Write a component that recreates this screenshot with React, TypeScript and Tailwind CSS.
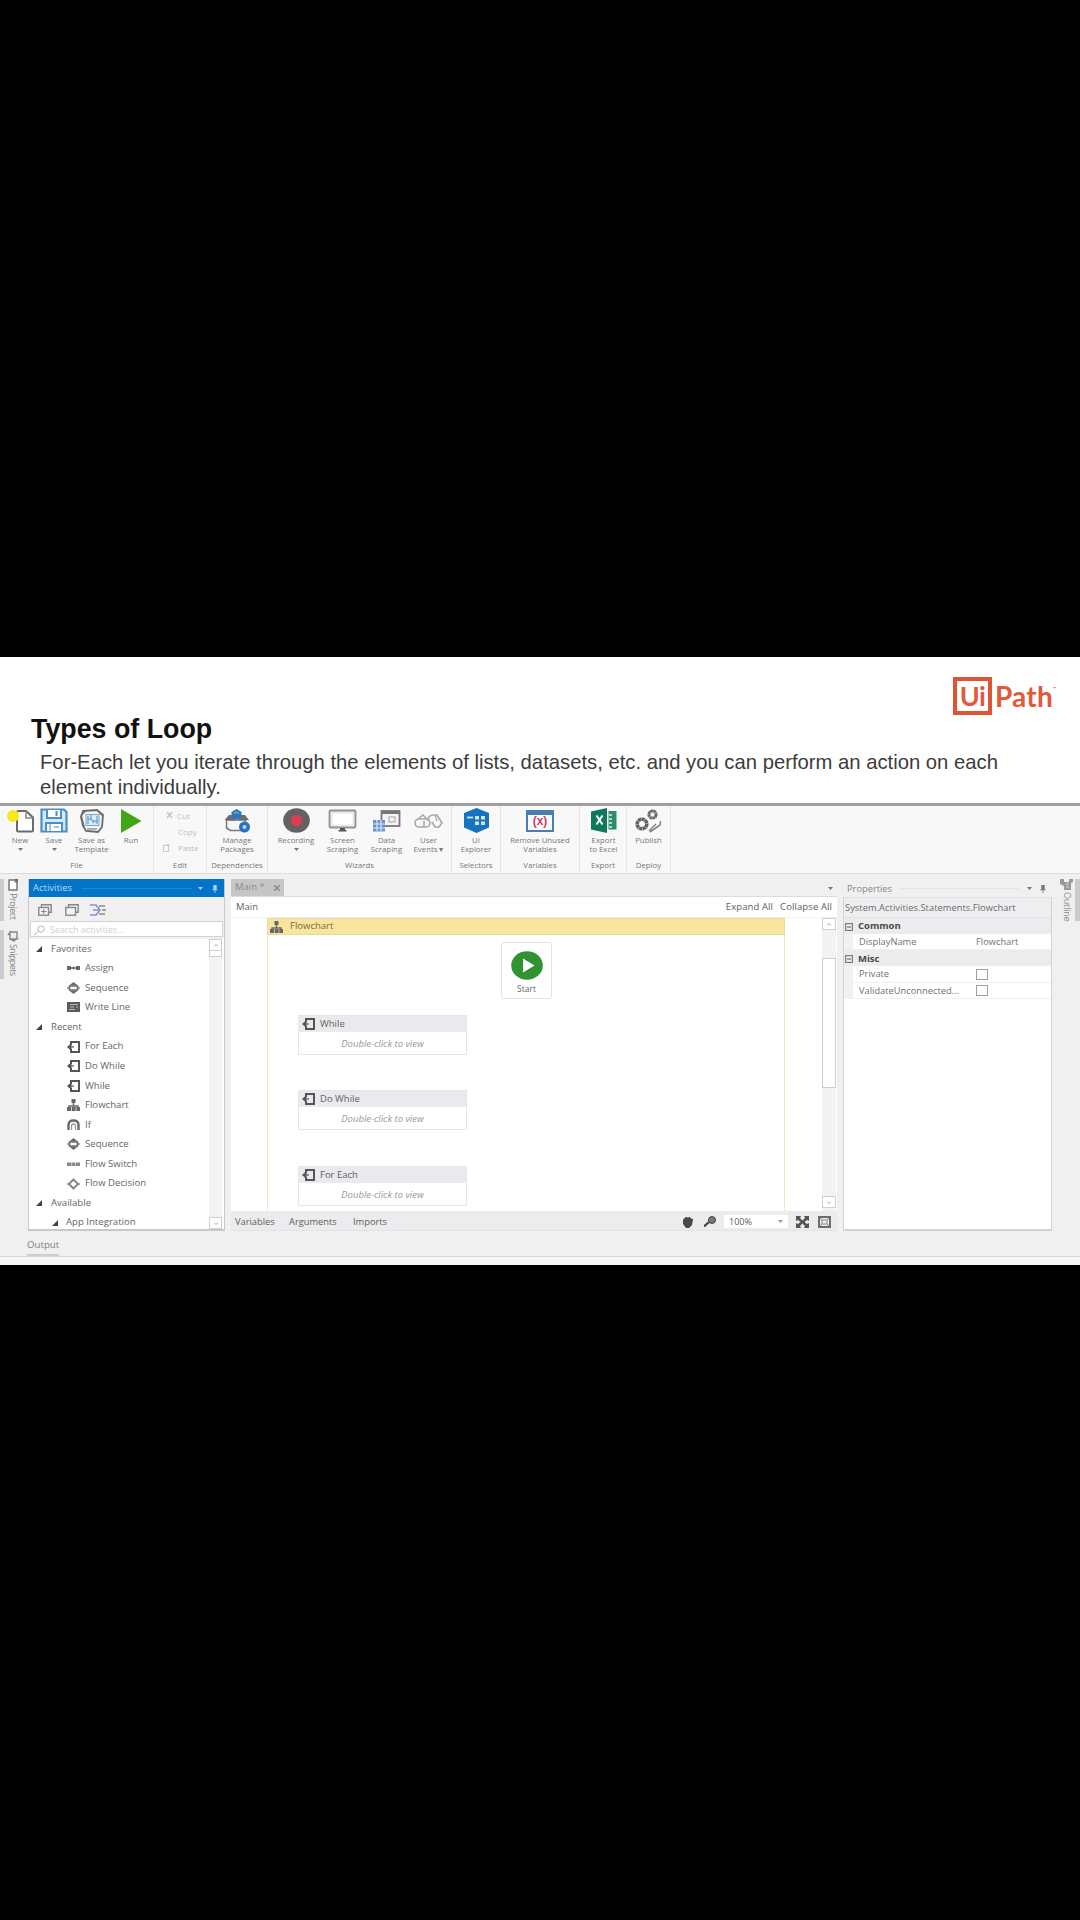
import React from "react";

type P = { children?: React.ReactNode; className?: string };

const G = "#686868";

/* ---------- small glyphs ---------- */
const Svg = ({ w, h, vb, children }: { w: number; h: number; vb: string; children: React.ReactNode }) => (
  <svg width={w} height={h} viewBox={vb} preserveAspectRatio="none" fill="none" className="block shrink-0">
    {children}
  </svg>
);

const Down = ({ c = "#777" }: { c?: string }) => (
  <Svg w={5} h={3} vb="0 0 6 4"><path d="M0 0h6L3 4z" fill={c} /></Svg>
);

const NewIcon = () => (
  <Svg w={29} h={24} vb="0 0 29 24">
    <path d="M11 3.500Q11 2 12.500 2H20l7 6.500V21q0 1.500-1.500 1.500H12.500Q11 22.500 11 21z" fill="#fff" stroke="#6a6a6a" strokeWidth="2" />
    <path d="M20 2v7h7" stroke="#888" strokeWidth="1.500" />
    <circle cx="7" cy="7" r="6" fill="#f7ea1c" />
  </Svg>
);
const SaveIcon = () => (
  <Svg w={28} h={25} vb="0 0 28 25">
    <path d="M1.500 1.500h22.500l2.500 2.500v19.500h-25z" fill="#d5e9f7" stroke="#4a8fc6" strokeWidth="2.200" />
    <path d="M7 2v8h14V2" fill="#fff" stroke="#4a8fc6" strokeWidth="2" />
    <path d="M16.500 3v5" stroke="#4a8fc6" strokeWidth="2" />
    <path d="M6 23v-8h16v8" fill="#fff" stroke="#4a8fc6" strokeWidth="2" />
    <path d="M10 16v7M14 19h5" stroke="#7fb2db" strokeWidth="1.500" />
  </Svg>
);
const TemplateIcon = () => (
  <Svg w={26} h={24} vb="0 0 26 24">
    <path d="M4 2 18 1l6 5-1 12-4 5-12-1-3-5-2-9z" fill="#f4f4f4" stroke="#6a6a6a" strokeWidth="1.800" />
    <path d="M2 6 6 3M2 6l3 12M19 2l5 5" stroke="#6a6a6a" strokeWidth="1.500" />
    <rect x="7" y="5.500" width="13" height="11" fill="#dcecf6" stroke="#74a9cf" />
    <path d="M9 7v8M12 6v4l3 4M18 7v8M8 10h5M14 12h5" stroke="#74a9cf" strokeWidth="1.400" />
    <path d="M8 20h10" stroke="#888" strokeWidth="1.300" />
  </Svg>
);
const RunIcon = () => (<Svg w={21} h={24} vb="0 0 21 24"><path d="M0 0 20.500 12 0 24z" fill="#43a417" /></Svg>);
const PackagesIcon = () => (
  <Svg w={28} h={24} vb="0 0 28 24">
    <path d="M3.500 11h19v10.500h-15L3.500 19z" fill="#f6f6f6" stroke="#777" strokeWidth="1.500" />
    <path d="M1.500 11 6 6h6v5.500zM26 11l-4-5h-6v5.500z" fill="#6d6d6d" />
    <path d="M13.500 0 18.500 3v5.500l-5 2.500-5-2.500V3z" fill="#2d77bd" />
    <path d="M11 4.500 13.500 3 16 4.500" stroke="#9cc5e8" />
    <circle cx="21.500" cy="18" r="5.500" fill="#2474bd" />
    <circle cx="21.500" cy="18" r="2" fill="#b9d6ee" />
  </Svg>
);
const RecordIcon = () => (
  <Svg w={27} h={25} vb="0 0 27 25"><ellipse cx="13.500" cy="12.500" rx="13.300" ry="12.200" fill="#626262" /><circle cx="13.500" cy="12.500" r="5.800" fill="#dc3c50" /></Svg>
);
const ScreenIcon = () => (
  <Svg w={29} h={24} vb="0 0 29 24">
    <rect x="1.500" y="1.500" width="26" height="17" rx="1" fill="#e8e8e8" stroke="#959595" strokeWidth="1.800" />
    <rect x="4.500" y="4.500" width="20" height="11" fill="#fff" />
    <path d="M12 19h5v2h1.500v1.500h-8V21H12z" fill="#555" />
  </Svg>
);
const DataIcon = () => (
  <Svg w={29} h={24} vb="0 0 29 24">
    <rect x="9.500" y="2" width="18" height="15" fill="#f5f5f5" stroke="#777" strokeWidth="1.800" />
    <path d="M9 3.500h19" stroke="#777" strokeWidth="3" />
    <path d="M17 8h6v5h-6z" stroke="#bbb" strokeWidth="1.500" />
    <rect x="1" y="11" width="12" height="11.500" fill="#6b93cc" />
    <path d="M1 15h12M1 19h12M5 11v11M9 11v11" stroke="#dbe7f5" strokeWidth="1.200" />
  </Svg>
);
const EventsIcon = () => (
  <Svg w={29} h={16} vb="0 0 29 16">
    <rect x="1" y="6" width="15" height="8" rx="4" stroke="#a8a8a8" strokeWidth="1.600" />
    <path d="M4 6 9 2l4 4M10 14V8" stroke="#a8a8a8" strokeWidth="1.600" />
    <path d="M14 8q0-6 5.500-6H23l5 8-3 4h-4l-3-5" stroke="#a8a8a8" strokeWidth="1.700" />
    <path d="m21 2 2 6" stroke="#a8a8a8" strokeWidth="1.200" />
  </Svg>
);
const ExplorerIcon = () => (
  <Svg w={27} h={25} vb="0 0 27 25">
    <path d="M13.500 0 26 5v14.500L13.500 25 1 19.500V5z" fill="#1673c0" />
    <path d="M12 8h4v3.500h-4zM18 8h4v3.500h-4zM12 13.500h4V17h-4zM18 13.500h4V17h-4z" fill="#cfe5f8" />
    <path d="M4 9.500h6" stroke="#cfe5f8" strokeWidth="1.800" />
  </Svg>
);
const UnusedIcon = () => (
  <div className="h-[22px] w-[28px] border-2 border-t-[5px] border-[#4a7fb0] bg-[#f5f9fc] text-center text-[12px] leading-[13px] font-bold text-[#d33d5c] [font-family:'Liberation_Sans',sans-serif]">(x)</div>
);
const ExcelIcon = () => (
  <Svg w={26} h={25} vb="0 0 26 25">
    <path d="M0 3.500 16 0v25L0 21.500z" fill="#0f7a5b" />
    <rect x="17.500" y="3" width="8" height="18.500" fill="#2a8e6c" />
    <path d="M18 7h3M18 11h3M18 15h3M18 19h3" stroke="#d9eee6" strokeWidth="1.300" />
    <path d="m5.500 7.500 6 9M11.500 7.500l-6 9" stroke="#fff" strokeWidth="2" />
  </Svg>
);
const PublishIcon = () => (
  <Svg w={27} h={24} vb="0 0 27 24">
    <circle cx="7" cy="15" r="4.800" stroke="#626262" strokeWidth="3.600" strokeDasharray="3.200 .4" />
    <circle cx="17.500" cy="5.500" r="3.600" stroke="#6a6a6a" strokeWidth="3" strokeDasharray="2.600 .3" />
    <path d="m14 22 7-7M15 23l10-7 .5-4" stroke="#888" strokeWidth="1.600" />
  </Svg>
);

const icons: Record<string, React.ReactNode> = {
  assign: <><path d="M0 6h13" stroke={G} strokeWidth="1.500" /><path d="M0 4h4v4H0zM9 4h4v4H9z" fill={G} /><path d="m5 6 2-2v4z" fill={G} /></>,
  seq: <><path d="M6.500 0 11 3.500H2zM6.500 12 2 8.500h9z" fill="#6c6c6c" /><path d="M2.500 4h8v4h-8z" stroke="#6c6c6c" strokeWidth="1.700" /><path d="M0 6h2M11 6h2" stroke="#888" strokeWidth="1.500" /></>,
  write: <><rect x="0" y="1" width="13" height="10" fill="#5a5a5a" /><path d="M3 3.500h8M3 6h4M9 6h2M2 8.500h6" stroke="#bbb" /></>,
  loop: <><path d="M4 1h8v10H4" stroke="#555" strokeWidth="2" /><path d="M4 0v4M4 12V8" stroke="#555" strokeWidth="2" /><path d="M0 6l4.500-4v8z" fill="#555" /><path d="M4 6h3" stroke="#777" strokeWidth="1.500" /></>,
  flow: <><rect x="4.500" y="0" width="4" height="4" fill={G} /><path d="M6.500 4v3M2 9V7h9v2" stroke={G} strokeWidth="1.400" /><path d="M0 8h4v4H0zM4.700 8h4v4h-4zM9.300 8H13v4H9.300z" fill={G} /></>,
  if: <><path d="M1.500 11V6q0-4.500 5-4.500t5 4.500v5" stroke={G} strokeWidth="2.400" /><path d="M4.500 11V7q0-2 2-2t2 2v4" stroke="#999" strokeWidth="1.300" /></>,
  sw: <path d="M0 4.500h4.500v3.500H0zM5 4.500h3.500v3.500H5zM9 4.500h4v3.500H9z" fill="#888" />,
  dec: <><path d="M6.500 1.500 11 6l-4.500 4.500L2 6z" stroke="#888" strokeWidth="2" /><path d="M0 6h3M10 6h3" stroke="#888" strokeWidth="1.500" /></>,
};
const Ico = ({ n }: { n: string }) => <Svg w={13} h={12} vb="0 0 13 12">{icons[n]}</Svg>;

/* ---------- ribbon ---------- */
const Group = ({ label, className = "", children }: P & { label: string }) => (
  <div className={"flex h-full shrink-0 flex-col border-r border-[#e6e6e8] " + className}>
    <div className="flex h-[54px]">{children}</div>
    <div className="text-center text-[7.8px] leading-[10px] whitespace-nowrap text-[#777]">{label}</div>
  </div>
);
const Tool = ({ icon, lines, className, arrow }: { icon: React.ReactNode; lines: string[]; className: string; arrow?: boolean }) => (
  <div className={"flex shrink-0 flex-col items-center " + className}>
    <div className="flex h-[29px] items-center justify-center">{icon}</div>
    <div className="pt-px text-center text-[7.8px] leading-[9px] whitespace-nowrap text-[#777]">
      {lines.map((l) => <div key={l}>{l}</div>)}
    </div>
    {arrow && <div className="mt-[3px]"><Down /></div>}
  </div>
);

const Ribbon = () => (
  <div className="flex h-[68px] border-b border-[#dcdcde] bg-[#f8f8f9]">
    <Group label="File" className="w-[154px]">
      <Tool className="ml-[2px] w-[36px]" icon={<NewIcon />} lines={["New"]} arrow />
      <Tool className="w-[32px]" icon={<SaveIcon />} lines={["Save"]} arrow />
      <Tool className="w-[43px]" icon={<TemplateIcon />} lines={["Save as", "Template"]} />
      <Tool className="w-[36px]" icon={<RunIcon />} lines={["Run"]} />
    </Group>
    <Group label="Edit" className="w-[53px]">
      <div className="flex flex-col text-[8px] leading-[16px] text-[#bdbdbd]">
        <div className="flex h-[16px] items-center gap-[4px] pt-[3px] pl-[12px]">
          <Svg w={7} h={8} vb="0 0 7 8"><path d="m1 0 5 6M6 0 1 6" stroke="#c4c4c4" strokeWidth="1.500" /></Svg>Cut
        </div>
        <div className="h-[16px] pt-[2px] pl-[24px]">Copy</div>
        <div className="flex h-[16px] items-center gap-[7px] pt-[3px] pl-[9px]">
          <Svg w={8} h={8} vb="0 0 8 8"><rect x=".5" y="1.500" width="5" height="6" stroke="#c9c9c9" /><path d="M3 1h4" stroke="#c4c4c4" /></Svg>Paste
        </div>
      </div>
    </Group>
    <Group label="Dependencies" className="w-[61px]">
      <Tool className="w-[60px]" icon={<PackagesIcon />} lines={["Manage", "Packages"]} />
    </Group>
    <Group label="Wizards" className="w-[184px]">
      <Tool className="ml-[4px] w-[48px]" icon={<RecordIcon />} lines={["Recording"]} arrow />
      <Tool className="w-[45px]" icon={<ScreenIcon />} lines={["Screen", "Scraping"]} />
      <Tool className="w-[43px]" icon={<DataIcon />} lines={["Data", "Scraping"]} />
      <Tool className="w-[41px]" icon={<EventsIcon />} lines={["User", "Events ▾"]} />
    </Group>
    <Group label="Selectors" className="w-[49px]">
      <Tool className="w-[48px]" icon={<ExplorerIcon />} lines={["UI", "Explorer"]} />
    </Group>
    <Group label="Variables" className="w-[79px]">
      <Tool className="w-[78px]" icon={<UnusedIcon />} lines={["Remove Unused", "Variables"]} />
    </Group>
    <Group label="Export" className="w-[47px]">
      <Tool className="w-[47px]" icon={<ExcelIcon />} lines={["Export", "to Excel"]} />
    </Group>
    <Group label="Deploy" className="w-[44px]">
      <Tool className="w-[43px]" icon={<PublishIcon />} lines={["Publish"]} />
    </Group>
  </div>
);

/* ---------- activities ---------- */
const Pin = ({ c }: { c: string }) => (
  <Svg w={6} h={8} vb="0 0 7 9"><path d="M1.500 0h4v5h1v1H4v3H3V6H0V5h1.500z" fill={c} /></Svg>
);
const tree: [string, string, number][] = [
  ["", "Favorites", 0], ["assign", "Assign", 2], ["seq", "Sequence", 2], ["write", "Write Line", 2],
  ["", "Recent", 0], ["loop", "For Each", 2], ["loop", "Do While", 2], ["loop", "While", 2],
  ["flow", "Flowchart", 2], ["if", "If", 2], ["seq", "Sequence", 2], ["sw", "Flow Switch", 2],
  ["dec", "Flow Decision", 2], ["", "Available", 0], ["", "App Integration", 1],
];
const Btn = ({ d, className = "" }: { d: string; className?: string }) => (
  <div className={"flex h-[12px] items-center justify-center border border-[#cfcfd2] bg-white " + className}>
    <Svg w={4} h={3} vb="0 0 6 4"><path d={d} stroke="#a5a5a5" strokeWidth="1.300" /></Svg>
  </div>
);
const UP = "M0 3.500 3 .5l3 3";
const DN = "M0 .5l3 3 3-3";

const Activities = () => (
  <div className="flex h-[352px] w-[197px] shrink-0 flex-col border-x border-b-2 border-[#c9c9cd] bg-[#f1eff0]">
    <div className="flex h-[18px] shrink-0 items-center bg-[#0375c9] pt-px pl-[4px] text-[9.500px] text-[#b9dbf5]">
      <span className="w-[43px]">Activities</span>
      <span className="mx-[6px] h-px flex-1 bg-[#2486d0]" />
      <span className="mr-[9px]"><Down c="#a9d2f2" /></span>
      <span className="mr-[6px]"><Pin c="#a9d2f2" /></span>
    </div>
    <div className="flex h-[24px] shrink-0 items-center gap-[13px] pt-px pl-[9px]">
      {[0, 1].map((i) => (
        <Svg key={i} w={14} h={12} vb="0 0 14 12"><path d="M3.500 3.500V.8h9.700v7.500h-2.700" stroke="#888" strokeWidth="1.400" /><rect x=".8" y="3.500" width="9.700" height="7.700" fill="#f5f5f5" stroke="#888" strokeWidth="1.400" />{i === 0 && <path d="M3 7.500h5.500M5.700 5v5" stroke="#888" />}</Svg>
      ))}
      <span className="-ml-[2px]"><Svg w={16} h={12} vb="0 0 16 12"><path d="M0 1h6l4 5-4 5H0M3 6h6" stroke="#8593d6" strokeWidth="1.600" /><path d="M9 2h6M9 10h6M12 6h4" stroke="#8a8a8a" strokeWidth="1.500" /></Svg></span>
    </div>
    <div className="mx-px flex h-[16px] shrink-0 items-center gap-[5px] border border-[#d2d2d4] bg-white pt-px pl-[3px] text-[9px] text-[#d0d0d0]">
      <Svg w={11} h={10} vb="0 0 11 10"><circle cx="7" cy="4" r="3.200" stroke="#b5b5b5" /><path d="M4.500 6 0 10" stroke="#b5b5b5" /></Svg>
      <span className="whitespace-nowrap">Search activities...</span>
    </div>
    <div className="mt-[2px] flex min-h-0 flex-1 bg-white">
      <div className="flex flex-1 flex-col">
        {tree.map(([ic, label, lv], i) => (
          <div key={i} className={"flex h-[19.570px] shrink-0 items-center text-[9.600px] whitespace-nowrap text-[#666] " + (lv === 0 ? "gap-[9px] pl-[7px]" : lv === 1 ? "gap-[8px] pl-[23px]" : "gap-[5px] pl-[38px]")}>
            {ic ? <Ico n={ic} /> : <Svg w={6} h={6} vb="0 0 6 6"><path d="M6 0v6H0z" fill="#444" /></Svg>}
            <span>{label}</span>
          </div>
        ))}
      </div>
      <div className="mr-[2px] flex w-[13px] flex-col justify-between bg-[#f3f3f4]">
        <div><Btn d={UP} /><div className="h-[6px] border border-t-0 border-[#cfcfd2] bg-white" /></div>
        <Btn d={DN} />
      </div>
    </div>
  </div>
);

/* ---------- designer ---------- */
const Node = ({ label, className }: { label: string; className: string }) => (
  <div className={"absolute left-[30px] h-[40px] w-[169px] border border-[#e6e6ea] bg-white " + className}>
    <div className="flex h-[16px] items-center gap-[5px] bg-[#e9eaee] pl-[3px] text-[9.500px] text-[#606060]"><Ico n="loop" />{label}</div>
    <div className="flex h-[22px] items-center justify-center pt-[2px] text-[9.500px] text-[#989898] italic">Double-click to view</div>
  </div>
);

const Designer = () => (
  <div className="flex h-[352px] w-[606px] shrink-0 flex-col">
    <div className="flex h-[18px] items-start justify-between border-b border-[#dcdcdf]">
      <div className="flex h-[17px] w-[53px] items-center gap-[9px] bg-[#c6c6c6] pl-[4px] text-[9.500px] text-[#8a8a8a]">
        <span>Main *</span>
        <Svg w={6} h={6} vb="0 0 6 6"><path d="m0 0 6 6M6 0 0 6" stroke="#888" strokeWidth="1.300" /></Svg>
      </div>
      <div className="mt-[8px] mr-[4px]"><Down /></div>
    </div>
    <div className="flex h-[21px] shrink-0 items-center border-b border-[#f1f1f2] bg-white pt-px pl-[5px] text-[9.500px] text-[#606060]">
      <span className="flex-1">Main</span>
      <span className="mr-[7px] tracking-[0.1px]">Expand All</span>
      <span className="mr-[5px] tracking-[0.1px]">Collapse All</span>
    </div>
    <div className="flex h-[293px] shrink-0 justify-between bg-white">
      <div className="relative ml-[36px] w-[518px] border-x border-[#f3e6bb]">
        <div className="-mx-px flex h-[17px] items-center gap-[7px] border border-[#ead79a] bg-[#f9e4a0] pl-[2px] text-[9.500px] text-[#7d6a3f]"><Ico n="flow" />Flowchart</div>
        <div className="absolute top-[24px] left-[233px] flex h-[57px] w-[51px] flex-col items-center rounded-[3px] border border-[#e2e2e4] bg-white pt-[8px] text-[8.500px] leading-[12px] text-[#666]">
          <Svg w={32} h={29} vb="0 0 32 29"><ellipse cx="16" cy="14.500" rx="15.800" ry="14.300" fill="#2f9430" /><path d="M12 7.500 23.500 14.500 12 21.500z" fill="#fff" /></Svg>
          <span className="mt-[3px]">Start</span>
        </div>
        <Node label="While" className="top-[97px]" />
        <Node label="Do While" className="top-[172px]" />
        <Node label="For Each" className="top-[248px]" />
      </div>
      <div className="mr-px flex w-[14px] flex-col bg-[#f3f3f5]">
        <Btn d={UP} />
        <div className="mt-[28px] h-[130px] border border-[#cdcdd2] bg-white" />
        <div className="flex-1" />
        <Btn d={DN} className="mb-[3px]" />
      </div>
    </div>
    <div className="flex h-[20px] shrink-0 items-center border-b border-[#e3e3e5] bg-[#ececee] pt-[2px] pl-[4px] text-[9.300px] text-[#5c5c5c]">
      <span className="w-[54px]">Variables</span>
      <span className="w-[64px]">Arguments</span>
      <span className="w-[329px]">Imports</span>
      <Svg w={11} h={12} vb="0 0 11 12"><path d="M1 4l1.500-2L4 1l2 .5L8 1l1 1.500L11 3l-1 6-3 3H4L1 8z" fill="#484848" /></Svg>
      <span className="ml-[11px]"><Svg w={12} h={11} vb="0 0 12 11"><circle cx="8" cy="4" r="3.500" fill="#777" stroke="#444" /><path d="M5 6 0 10.500" stroke="#444" strokeWidth="2.200" /></Svg></span>
      <div className="ml-[8px] flex h-[13px] w-[64px] items-center justify-between bg-white px-[5px] text-[9px]"><span>100%</span><Down c="#999" /></div>
      <span className="ml-[8px]"><Svg w={13} h={12} vb="0 0 13 12"><path d="M0 0h5L4 2l2.500 2.500L9 2 8 0h5v5l-2-1-2.500 2L11 8l2-1v5H8l1-2-2.500-2.500L4 10l1 2H0V7l2 1 2.500-2L2 4 0 5z" fill="#555" /></Svg></span>
      <span className="ml-[9px]"><Svg w={13} h={12} vb="0 0 13 12"><rect x="1" y="1" width="11" height="10" stroke="#6c6c6c" strokeWidth="2" /><path d="M4 4h5v4H4zM2 2l2 2M11 2 9 4M2 10l2-2M11 10 9 8" stroke="#888" /></Svg></span>
    </div>
  </div>
);

/* ---------- properties ---------- */
const Minus = () => (<Svg w={8} h={8} vb="0 0 8 8"><rect x=".6" y=".6" width="6.800" height="6.800" fill="#eee" stroke="#808080" strokeWidth="1.200" /><path d="M2 4h4" stroke="#555" /></Svg>);
const Head = ({ children }: P) => (
  <div className="flex h-[16px] items-center gap-[5px] bg-[#ececee] pt-px pl-px text-[9.500px] font-bold text-[#484848]"><Minus />{children}</div>
);
const Prop = ({ name, children }: P & { name: string }) => (
  <div className="flex h-[16.300px] items-center border-b border-l-[9px] border-[#f1f1f3] bg-white pt-px pl-[6px] text-[9.300px] text-[#707070]">
    <span className="w-[117px] whitespace-nowrap">{name}</span>{children}
  </div>
);
const Box = () => <span className="h-[11px] w-[12px] border border-[#a0a0a0] bg-white" />;

const Properties = () => (
  <div className="flex h-[352px] w-[209px] shrink-0 flex-col border-x border-b-2 border-[#d3d3d6] bg-white">
    <div className="-mx-px flex h-[18px] items-center bg-[#f0f0f0] pt-px pl-[4px] text-[9.300px] text-[#888]">
      <span>Properties</span><span className="mx-[8px] h-px flex-1 bg-[#e4e4e6]" />
      <span className="mr-[8px]"><Down /></span><span className="mr-[6px]"><Pin c="#777" /></span>
    </div>
    <div className="flex h-[21px] items-center border-y border-[#e1e1e4] bg-[#eeeef0] pt-px pl-[1px] text-[9.300px] tracking-[0.05px] whitespace-nowrap text-[#6c6c6c]">System.Activities.Statements.Flowchart</div>
    <Head>Common</Head>
    <Prop name="DisplayName">Flowchart</Prop>
    <Head>Misc</Head>
    <Prop name="Private"><Box /></Prop>
    <Prop name="ValidateUnconnected..."><Box /></Prop>
  </div>
);

export default function App() {
  return (
    <div className="flex h-[1920px] w-[1080px] flex-col overflow-hidden bg-black pt-[657px] [font-family:'Open_Sans','Noto_Sans',sans-serif]">
      <div className="flex h-[608px] flex-col bg-[#f0f0f0]">
        <header className="flex h-[149px] shrink-0 justify-between border-b-[3px] border-[#a0a0a0] bg-white [font-family:'Liberation_Sans',sans-serif]">
          <div className="flex w-[953px] shrink-0 flex-col pt-[56px]">
            <h1 className="ml-[31px] text-[26.800px] leading-[32px] font-bold whitespace-nowrap text-[#111]">Types of Loop</h1>
            <p className="mt-[5px] ml-[40px] text-[20.250px] leading-[24.500px] whitespace-nowrap text-[#3c3c3c]">
              For-Each let you iterate through the elements of lists, datasets, etc. and you can perform an action on each<br />element individually.
            </p>
          </div>
          <div className="flex flex-1 items-start pt-[20px] font-bold text-[#e2593b] [font-family:Lato,sans-serif]">
            <div className="flex h-[38px] w-[39px] shrink-0 items-center justify-center border-[4px] border-[#dd5535] pb-px text-[27px] leading-[30px] tracking-[-0.5px]">Ui</div>
            <div className="ml-[3px] text-[28px] leading-[38px] tracking-[0.2px]">Path</div>
            <div className="mt-[9px] text-[4px] leading-[5px]">™</div>
          </div>
        </header>
        <Ribbon />
        <main className="flex h-[357px] shrink-0 pt-[5px]">
          <aside className="flex w-[28px] shrink-0 text-[9px] text-[#888]">
            <div className="flex w-[4px] flex-col gap-[9px]"><div className="h-[42px] bg-[#cbcbcd]" /><div className="h-[49px] bg-[#cbcbcd]" /></div>
            <div className="flex w-[18px] flex-col items-center">
              <div className="flex h-[51px] flex-col items-center gap-[2px]">
                <Svg w={10} h={12} vb="0 0 10 12"><path d="M1 1h5l3 3v7H1z" fill="#fff" stroke="#777" strokeWidth="1.500" /><path d="M6 0h4v4z" fill="#666" /></Svg>
                <span className="leading-[12px] tracking-[-0.4px] [writing-mode:vertical-rl]">Project</span>
              </div>
              <div className="flex flex-col items-center gap-[2px]">
                <Svg w={12} h={12} vb="0 0 12 12"><path d="M3 2h7v7H3zM1 5l3-4M3 9l4 2 4-3" fill="#eee" stroke="#888" strokeWidth="1.400" /></Svg>
                <span className="leading-[12px] tracking-[-0.6px] [writing-mode:vertical-rl]">Snippets</span>
              </div>
            </div>
          </aside>
          <Activities />
          <div className="w-[6px] shrink-0" />
          <Designer />
          <div className="w-[6px] shrink-0" />
          <Properties />
          <aside className="flex flex-1 justify-between pl-[8px] text-[9px] text-[#888]">
            <div className="flex w-[13px] flex-col items-center gap-[2px]">
              <Svg w={13} h={11} vb="0 0 13 11"><path d="M0 0h4v3h5V0h4v3l-2 1v7H4V7L0 5z" fill="#999" /><path d="M6 5h3M6 8h3" stroke="#ddd" /></Svg>
              <span className="leading-[12px] tracking-[-0.2px] [writing-mode:vertical-rl]">Outline</span>
            </div>
            <div className="h-[42px] w-[5px] bg-[#cbcbcd]" />
          </aside>
        </main>
        <footer className="flex flex-1 flex-col">
          <div className="flex h-[26px] shrink-0 items-end border-b border-[#d6d6d8] pl-[27px]">
            <span className="border-b-2 border-[#cfcfd1] text-[9.700px] leading-[18px] text-[#808080]">Output</span>
          </div>
          <div className="flex-1 bg-[#f7f7f8]" />
        </footer>
      </div>
    </div>
  );
}
